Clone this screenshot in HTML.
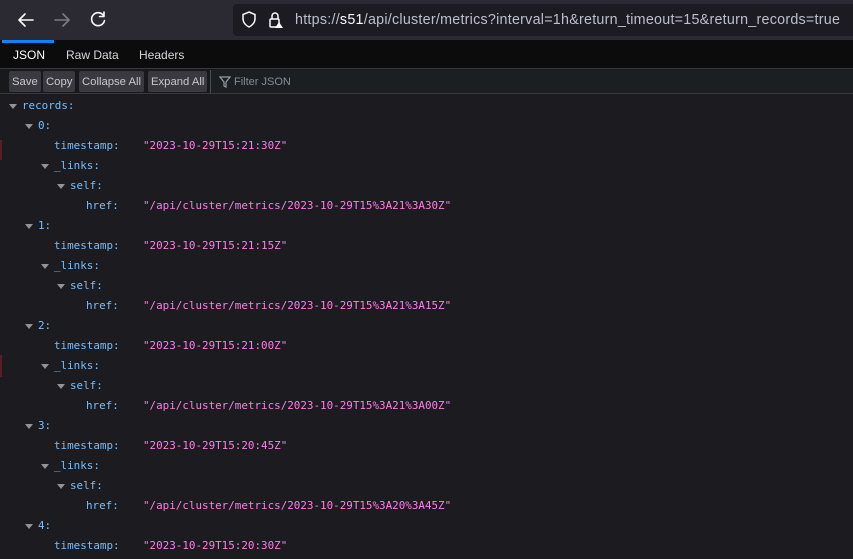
<!DOCTYPE html>
<html><head><meta charset="utf-8"><style>
*{margin:0;padding:0;box-sizing:border-box}
body{width:853px;height:559px;overflow:hidden;background:#1c1b1f;font-family:"Liberation Sans",sans-serif;position:relative}
.top{position:absolute;left:0;top:0;width:853px;height:40px;background:#2b2a33}
.url{position:absolute;left:233px;top:4px;width:625px;height:32px;background:#1c1b22;border-radius:4px}
.url .t{position:absolute;left:62px;top:8px;font-size:14.3px;color:#bfbfc9;white-space:nowrap;letter-spacing:0.25px}
.url .t b{font-weight:normal;color:#fbfbfe}
.tabs{position:absolute;left:0;top:40px;width:853px;height:29px;background:#0c0c0d;border-bottom:1px solid #38383d}
.tabs span{position:absolute;top:8px;font-size:12px;color:#d7d7db}
.blue{position:absolute;left:2px;top:40px;width:52px;height:3px;background:#0a84ff}
.tb{position:absolute;left:0;top:69px;width:853px;height:25px;background:#18191b;border-bottom:1px solid #38383d}
.btn{position:absolute;top:2px;height:21px;background:#3a393f;border-radius:2px;color:#c8c8cc;font-size:11.3px;line-height:22px;padding:0 3px}
.filter{position:absolute;left:210px;top:1px;width:643px;height:23px;background:#1c1f22;border-left:1px solid #4a4a4f}
.filter span{position:absolute;left:23px;top:6px;font-size:11px;color:#8a8a92}
.row{position:absolute;font-family:"DejaVu Sans Mono","Liberation Mono",monospace;font-size:10.9px;white-space:pre;height:20px;line-height:20px}
.k{color:#75bfff}.s{color:#ff7de9}
.tri{position:absolute;width:0;height:0;border-left:4px solid transparent;border-right:4px solid transparent;border-top:5px solid #939395}
</style></head><body>
<div class="top">
<svg width="230" height="40" style="position:absolute;left:0;top:0" fill="none" stroke-width="1.6" stroke-linecap="round" stroke-linejoin="round">
<path d="M19 20h14M19 20l6-6M19 20l6 6" stroke="#fbfbfe"/>
<path d="M55 20h14M69 20l-6-6M69 20l-6 6" stroke="#7c7b83"/>
<path d="M103.5 15.5A6.5 6.5 0 1 0 104.5 20.5" stroke="#fbfbfe"/><path d="M104 12v4.5h-4.5" stroke="#fbfbfe"/>
</svg>
</div>
<div class="url">
<svg width="60" height="32" style="position:absolute;left:0;top:0" fill="none" stroke="#fbfbfe" stroke-width="1.5">
<path d="M16 8l6 2.5v4c0 4-2.8 7-6 8.5c-3.2-1.5-6-4.5-6-8.5v-4z"/>
<rect x="37" y="15" width="9" height="8" rx="1"/><path d="M39 15v-3a3 3 0 0 1 6 0v3"/>
<path d="M46 18l4 6h-8z" fill="#fbfbfe" stroke="none"/>
</svg>
<div class="t">https://<b>s51</b>/api/cluster/metrics?interval=1h&amp;return_timeout=15&amp;return_records=true</div>
</div>
<div class="tabs"><span style="left:13px;color:#fff">JSON</span><span style="left:66px">Raw Data</span><span style="left:139px">Headers</span></div>
<div class="blue"></div>
<div class="tb">
<div class="btn" style="left:9px">Save</div>
<div class="btn" style="left:43px">Copy</div>
<div class="btn" style="left:79px">Collapse All</div>
<div class="btn" style="left:148px">Expand All</div>
<div class="filter"><svg width="12" height="12" style="position:absolute;left:8px;top:6px" fill="none" stroke="#9a9aa0" stroke-width="1.2"><path d="M1 1h10L7 6v5l-2-1V6z"/></svg><span>Filter JSON</span></div>
</div>
<div style="position:absolute;left:0;top:140px;width:2px;height:20px;background:#5a1f24"></div>
<div style="position:absolute;left:0;top:355px;width:2px;height:22px;background:#5a1f24"></div>
<div id="c"></div>
<script>
var rows=[],ts=["30","15","00","45","30"],hr=["3A21%3A30Z","3A21%3A15Z","3A21%3A00Z","3A20%3A45Z"],mm=["21","21","21","20","20"];
rows.push([0,9,22,'records:',null]);
for(var i=0;i<5;i++){
rows.push([0,25,38,i+':',null]);
rows.push([0,null,54,'timestamp:','"2023-10-29T15:'+mm[i]+':'+ts[i]+'Z"']);
if(i<4){rows.push([0,41,54,'_links:',null]);rows.push([0,57,70,'self:',null]);rows.push([0,null,86,'href:','"/api/cluster/metrics/2023-10-29T15%'+hr[i]+'"']);}
}
var h='';
rows.forEach(function(r,j){var y=95.5+20*j;
if(r[1]!==null)h+='<div class="tri" style="left:'+r[1]+'px;top:'+(y+8)+'px"></div>';
h+='<div class="row k" style="left:'+r[2]+'px;top:'+y+'px">'+r[3]+'</div>';
if(r[4])h+='<div class="row s" style="left:143px;top:'+y+'px">'+r[4]+'</div>';});
document.getElementById('c').innerHTML=h;
</script>
</body></html>
